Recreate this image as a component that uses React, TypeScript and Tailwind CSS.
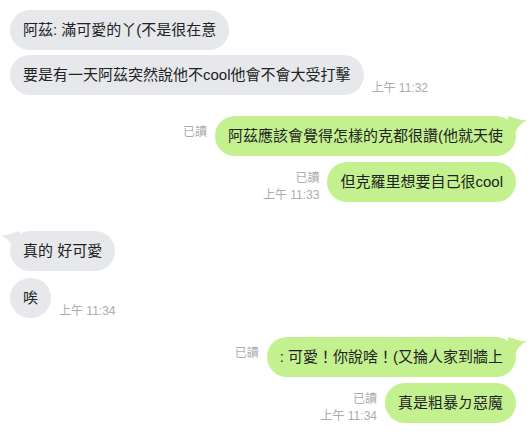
import type { ReactNode } from 'react';

// chat bubble with optional tail on the first message of a group
function Bubble({ side, tail, children }: { side: 'in' | 'out'; tail?: boolean; children: ReactNode }) {
  const color = side === 'in' ? '#e6e8eb' : '#c3f18f';
  return (
    <div
      className={`relative flex h-10 items-center whitespace-nowrap rounded-[20px] px-[13px] text-[15px] text-[#222] ${
        side === 'in' ? 'bg-[#e6e8eb]' : 'bg-[#c3f18f]'
      }`}
    >
      {tail && side === 'out' && (
        <svg className="absolute right-[-12px] top-0" width="20" height="16" viewBox="0 0 20 16">
          <path d="M0,0 C6,1 12,5 19,4 C14,7 10,10 8,15 L0,15 Z" fill={color} />
        </svg>
      )}
      {tail && side === 'in' && (
        <svg className="absolute left-[-10px] top-0" width="20" height="16" viewBox="0 0 20 16">
          <path d="M20,0 C14,1 8,5 1,4 C6,7 10,10 12,15 L20,15 Z" fill={color} />
        </svg>
      )}
      <span className="relative">{children}</span>
    </div>
  );
}

function Time({ children }: { children: ReactNode }) {
  return <span className="ml-[8px] text-[12px] leading-[14px] text-[#aaacb0]">{children}</span>;
}

function Read({ time }: { time?: string }) {
  return (
    <div className="mr-[8px] flex flex-col items-end gap-[3px] text-[12px] leading-[14px] text-[#aaacb0]">
      <span>已讀</span>
      <span className="h-[14px] whitespace-nowrap">{time}</span>
    </div>
  );
}

export default function App() {
  return (
    <div className="h-[432px] w-[531px] overflow-hidden bg-white pt-[10px] font-['Liberation_Sans','Noto_Sans_CJK_TC',sans-serif]">
      {/* received */}
      <div className="flex items-end pl-[10px]">
        <Bubble side="in">
          阿茲<span className="mr-[4px]">:</span>滿可愛的丫(不是很在意
        </Bubble>
      </div>
      <div className="mt-[5px] flex items-end pl-[10px]">
        <Bubble side="in">要是有一天阿茲突然說他不cool他會不會大受打擊</Bubble>
        <Time>上午 11:32</Time>
      </div>

      {/* sent */}
      <div className="mt-[21px] flex items-end justify-end pr-[15px]">
        <Read />
        <Bubble side="out" tail>
          阿茲應該會覺得怎樣的克都很讚(他就天使
        </Bubble>
      </div>
      <div className="mt-[6px] flex items-end justify-end pr-[15px]">
        <Read time="上午 11:33" />
        <Bubble side="out">但克羅里想要自己很cool</Bubble>
      </div>

      {/* received */}
      <div className="mt-[29px] flex items-end pl-[10px]">
        <Bubble side="in" tail>
          真的 好可愛
        </Bubble>
      </div>
      <div className="mt-[7px] flex items-end pl-[10px]">
        <Bubble side="in">唉</Bubble>
        <Time>上午 11:34</Time>
      </div>

      {/* sent */}
      <div className="mt-[19px] flex items-end justify-end pr-[15px]">
        <Read />
        <Bubble side="out" tail>
          <span className="mr-[4px]">:</span>可愛！你說啥！(又掄人家到牆上
        </Bubble>
      </div>
      <div className="mt-[6px] flex items-end justify-end pr-[15px]">
        <Read time="上午 11:34" />
        <Bubble side="out">真是粗暴ㄉ惡魔</Bubble>
      </div>
    </div>
  );
}
